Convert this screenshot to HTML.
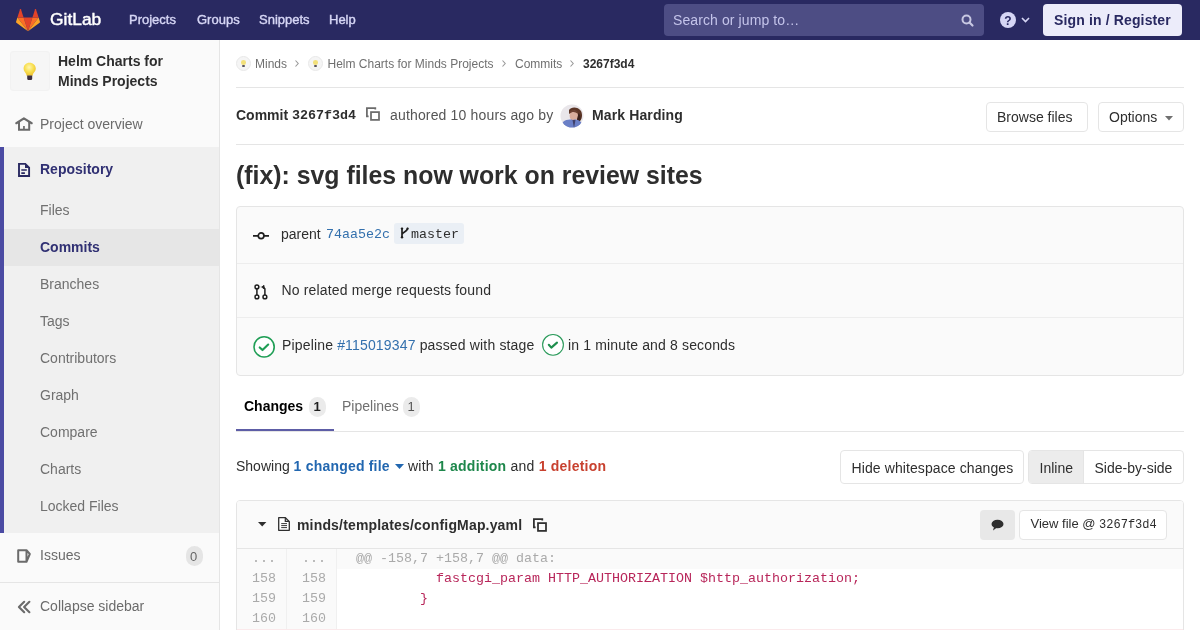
<!DOCTYPE html>
<html><head><meta charset="utf-8">
<style>
*{box-sizing:border-box;margin:0;padding:0}
html,body{width:1200px;height:630px;overflow:hidden;background:#fff;-webkit-font-smoothing:antialiased;font-family:"Liberation Sans",sans-serif;color:#2e2e2e;font-size:14px}
.a{position:absolute}
.mono{font-family:"Liberation Mono",monospace}
.t{position:absolute;white-space:nowrap;line-height:1}
.b{font-weight:bold}
svg{position:absolute;overflow:visible}
</style></head><body><div id="root" style="position:absolute;left:0;top:0;width:1200px;height:630px;will-change:transform">
<!-- HEADER -->
<div class="a" style="left:0;top:0;width:1200px;height:40px;background:#292961">
  <svg style="left:16px;top:8.6px" width="24" height="22.2" viewBox="0 0 210 194">
    <path d="M105.06 193.66 L143.7 74.73 H66.42 Z" fill="#e24329"/>
    <path d="M105.06 193.66 L66.42 74.73 H12.27 Z" fill="#fc6d26"/>
    <path d="M12.27 74.74 L0.53 110.88 C-0.54 114.17 0.63 117.78 3.43 119.82 L105.06 193.66 Z" fill="#fca326"/>
    <path d="M12.27 74.74 H66.42 L43.15 3.11 C41.95 -0.58 36.74 -0.58 35.54 3.11 Z" fill="#e24329"/>
    <path d="M105.06 193.66 L143.7 74.73 H197.85 Z" fill="#fc6d26"/>
    <path d="M197.85 74.74 L209.6 110.88 C210.67 114.17 209.49 117.78 206.69 119.82 L105.06 193.66 Z" fill="#fca326"/>
    <path d="M197.85 74.74 H143.7 L166.97 3.11 C168.17 -0.58 173.39 -0.58 174.59 3.11 Z" fill="#e24329"/>
  </svg>
  <div class="t" style="left:50px;top:10.5px;font-size:17.4px;color:#fff;-webkit-text-stroke:0.45px #fff">GitLab</div>
  <div class="t" style="left:129px;top:13px;font-size:13px;color:#d6d6f5;-webkit-text-stroke:0.4px #d6d6f5">Projects</div>
  <div class="t" style="left:197px;top:13px;font-size:13px;color:#d6d6f5;-webkit-text-stroke:0.4px #d6d6f5">Groups</div>
  <div class="t" style="left:259px;top:13px;font-size:13px;color:#d6d6f5;-webkit-text-stroke:0.4px #d6d6f5">Snippets</div>
  <div class="t" style="left:329px;top:13px;font-size:13px;color:#d6d6f5;-webkit-text-stroke:0.4px #d6d6f5">Help</div>
  <div class="a" style="left:664px;top:4px;width:320px;height:32px;background:#4d4d84;border-radius:4px"></div>
  <div class="t" style="left:673px;top:13px;color:#c4c4ea;letter-spacing:0.1px">Search or jump to…</div>
  <svg style="left:961px;top:14px" width="13" height="13" viewBox="0 0 13 13"><circle cx="5.5" cy="5.5" r="4" fill="none" stroke="#c8c8e2" stroke-width="2"/><path d="M8.5 8.5 L11.5 11.5" stroke="#c8c8e2" stroke-width="2.2" stroke-linecap="round"/></svg>
  <svg style="left:1000px;top:12px" width="16" height="16" viewBox="0 0 16 16"><circle cx="8" cy="8" r="8" fill="#d6d6f5"/><text x="8" y="12.5" font-family="Liberation Sans" font-weight="bold" font-size="12" text-anchor="middle" fill="#292961">?</text></svg>
  <svg style="left:1021px;top:17px" width="9" height="6" viewBox="0 0 9 6"><path d="M1 1 L4.5 4.5 L8 1" fill="none" stroke="#d6d6f5" stroke-width="1.6"/></svg>
  <div class="a" style="left:1043px;top:4px;width:139px;height:32px;background:#ececfa;border-radius:4px"></div>
  <div class="t b" style="left:1054px;top:13px;color:#292961;letter-spacing:0.14px">Sign in / Register</div>
</div>

<!-- SIDEBAR -->
<div class="a" style="left:0;top:40px;width:220px;height:590px;background:#fafafa;border-right:1px solid #e5e5e5"></div>
<div class="a" style="left:10px;top:51px;width:40px;height:40px;background:#f6f6f6;border-radius:4px;box-shadow:inset 0 0 0 1px #f2f2f2"></div>
<svg style="left:23.3px;top:62px;filter:blur(0.45px)" width="14" height="19" viewBox="0 0 14 19"><defs><radialGradient id="bg1" cx="0.45" cy="0.35" r="0.6"><stop offset="0" stop-color="#fff6b0"/><stop offset="0.6" stop-color="#f8df50"/><stop offset="1" stop-color="#efc534"/></radialGradient></defs><path d="M6.5 0.8 C10 0.8 12.8 3.4 12.8 6.6 C12.8 9 11 10.5 10 12 L9.6 13.8 H3.6 L3.2 12 C2.2 10.5 0.6 9 0.6 6.6 C0.6 3.4 3 0.8 6.5 0.8 Z" fill="url(#bg1)"/><path d="M4.2 13.4 H9.2 V16.4 C9.2 17.3 8.4 18 7.6 18 H5.8 C5 18 4.2 17.3 4.2 16.4 Z" fill="#3d3040"/></svg>
<div class="t b" style="left:58px;top:50.5px;line-height:20.7px">Helm Charts for<br>Minds Projects</div>
<svg style="left:10px;top:110px" width="30" height="30" viewBox="10 110 30 30"><path d="M16.3 123.2 L23.9 118.4 L31.7 123.2" fill="none" stroke="#6b6b6b" stroke-width="2.2" stroke-linejoin="round" stroke-linecap="round"/><path d="M19 121.5 V129.8 H29.2 V121.5" fill="none" stroke="#6b6b6b" stroke-width="2"/><rect x="23.1" y="126" width="1.7" height="4" fill="#6b6b6b"/></svg>
<div class="t" style="left:40px;top:117px;color:#6b6b6b">Project overview</div>

<div class="a" style="left:0;top:147px;width:219px;height:386px;background:#f0f0f0"></div>
<div class="a" style="left:0;top:147px;width:4px;height:386px;background:#4b4ba3"></div>
<div class="a" style="left:4px;top:229px;width:215px;height:37px;background:#e6e6e6"></div>
<svg style="left:12px;top:155px" width="24" height="28" viewBox="12 155 24 28"><path d="M19 163.9 H25.3 L29.1 167.7 V176 H19 Z" fill="none" stroke="#292961" stroke-width="1.9" stroke-linejoin="miter"/><path d="M25 163.5 V168 H29.5 Z" fill="#292961"/><path d="M21.3 170 H26.8 M21.3 173.1 H24.9" stroke="#292961" stroke-width="1.7"/></svg>
<div class="t b" style="left:40px;top:162px;color:#303073">Repository</div>
<div class="t" style="left:40px;top:203px;color:#707070">Files</div>
<div class="t b" style="left:40px;top:240px;color:#303073">Commits</div>
<div class="t" style="left:40px;top:277px;color:#707070">Branches</div>
<div class="t" style="left:40px;top:314px;color:#707070">Tags</div>
<div class="t" style="left:40px;top:351px;color:#707070">Contributors</div>
<div class="t" style="left:40px;top:388px;color:#707070">Graph</div>
<div class="t" style="left:40px;top:425px;color:#707070">Compare</div>
<div class="t" style="left:40px;top:462px;color:#707070">Charts</div>
<div class="t" style="left:40px;top:499px;color:#707070">Locked Files</div>

<svg style="left:17px;top:549px" width="14" height="14" viewBox="0 0 14 14"><path d="M1.2 1.2 H9.5 L12.8 5 L9.5 12.8 H1.2 Z M9.5 1.2 V12.8" fill="none" stroke="#6b6b6b" stroke-width="2" stroke-linejoin="round"/></svg>
<div class="t" style="left:40px;top:548px;color:#6b6b6b">Issues</div>
<div class="a" style="left:186px;top:546px;width:17px;height:20px;border-radius:10px;background:#e5e5e5"></div>
<div class="t" style="left:190px;top:550px;font-size:13px;color:#666">0</div>
<div class="a" style="left:0;top:582px;width:219px;height:1px;background:#e5e5e5"></div>
<svg style="left:12px;top:594px" width="24" height="24" viewBox="12 594 24 24"><path d="M24.2 601.8 L18.9 607 L24.2 612.2 M29.4 601.8 L24.1 607 L29.4 612.2" fill="none" stroke="#6b6b6b" stroke-width="2.1" stroke-linecap="round" stroke-linejoin="round"/></svg>
<div class="t" style="left:40px;top:599px;color:#6b6b6b">Collapse sidebar</div>

<!-- BREADCRUMBS -->
<div class="a" style="left:236px;top:56px;width:15px;height:15px;border-radius:50%;background:#f5f5f5;border:1px solid #e8e8e8"></div>
<div class="a" style="left:241.20000000000002px;top:60px;width:5.2px;height:4.6px;border-radius:50%;background:#f2e07a;filter:blur(0.4px)"></div><div class="a" style="left:242.4px;top:64.6px;width:2.6px;height:2.2px;border-radius:1px;background:#5a5560;filter:blur(0.3px)"></div>
<div class="t" style="left:255px;top:57.8px;font-size:12px;color:#707070">Minds</div>
<svg style="left:295px;top:60px" width="4" height="7" viewBox="0 0 4 7"><path d="M0.5 0.5 L3.2 3.5 L0.5 6.5" fill="none" stroke="#999" stroke-width="1.1"/></svg>
<div class="a" style="left:308px;top:56px;width:15px;height:15px;border-radius:50%;background:#f5f5f5;border:1px solid #e8e8e8"></div>
<div class="a" style="left:313.2px;top:60px;width:5.2px;height:4.6px;border-radius:50%;background:#f2e07a;filter:blur(0.4px)"></div><div class="a" style="left:314.40000000000003px;top:64.6px;width:2.6px;height:2.2px;border-radius:1px;background:#5a5560;filter:blur(0.3px)"></div>
<div class="t" style="left:327.5px;top:57.8px;font-size:12px;color:#707070">Helm Charts for Minds Projects</div>
<svg style="left:502px;top:60px" width="4" height="7" viewBox="0 0 4 7"><path d="M0.5 0.5 L3.2 3.5 L0.5 6.5" fill="none" stroke="#999" stroke-width="1.1"/></svg>
<div class="t" style="left:515px;top:57.8px;font-size:12px;color:#707070">Commits</div>
<svg style="left:570px;top:60px" width="4" height="7" viewBox="0 0 4 7"><path d="M0.5 0.5 L3.2 3.5 L0.5 6.5" fill="none" stroke="#999" stroke-width="1.1"/></svg>
<div class="t b" style="left:583px;top:57.8px;font-size:12px;color:#2e2e2e">3267f3d4</div>
<div class="a" style="left:236px;top:87px;width:948px;height:1px;background:#e5e5e5"></div>

<!-- COMMIT HEADER -->
<div class="t b" style="left:236px;top:108px">Commit</div>
<div class="t b mono" style="left:292px;top:108.5px;font-size:13.33px">3267f3d4</div>
<svg style="left:360px;top:102px" width="26" height="24" viewBox="360 102 26 24"><path d="M368.6 116.3 H366.9 V108.1 H375.3 V109.6" fill="none" stroke="#6b6b6b" stroke-width="1.75"/><rect x="371" y="112.1" width="8" height="7.8" fill="none" stroke="#6b6b6b" stroke-width="1.75"/></svg>
<div class="t" style="left:390px;top:108px;color:#555;letter-spacing:0.16px">authored 10 hours ago by</div>
<svg style="left:559.5px;top:104px" width="24" height="24" viewBox="0 0 24 24"><defs><clipPath id="avc"><circle cx="12" cy="12" r="11.5"/></clipPath><filter id="blr"><feGaussianBlur stdDeviation="0.7"/></filter></defs><g clip-path="url(#avc)"><rect width="24" height="24" fill="#e9e6ea"/><g filter="url(#blr)"><path d="M9 6 C11 2.5 18 2.5 21 7 C23 11 22 16 19 18 L16 14 C17 10 15 7 12 8 L9 10 Z" fill="#5b3526"/><ellipse cx="13.8" cy="11.8" rx="4.2" ry="5.2" fill="#d8ad9c"/><path d="M9.5 8 C11 5.5 16 5 18 8.5 L17.5 9.5 C15 7.5 12 7.5 10 9.5 Z" fill="#6b4030"/><path d="M18.5 9 C21 11 21 16 19 19 L17 16 Z" fill="#3a221c"/><path d="M0 24 L3 18 C6 15.5 10 15 13 16 C16 15 19 16 21 18 L24 24 Z" fill="#6a7fc6"/><path d="M12.5 16 L14 24 L15.5 16 Z" fill="#3f3f6a"/></g></g></svg>
<div class="t b" style="left:592px;top:108px;letter-spacing:0.12px">Mark Harding</div>
<div class="a" style="left:986px;top:102px;width:102px;height:30px;border:1px solid #e5e5e5;border-radius:4px;background:#fff"></div>
<div class="t" style="left:997px;top:110px">Browse files</div>
<div class="a" style="left:1098px;top:102px;width:86px;height:30px;border:1px solid #e5e5e5;border-radius:4px;background:#fff"></div>
<div class="t" style="left:1109px;top:110px">Options</div>
<svg style="left:1165px;top:116px" width="8" height="5" viewBox="0 0 8 5"><path d="M0 0 H8 L4 4.5 Z" fill="#707070"/></svg>
<div class="a" style="left:236px;top:144px;width:948px;height:1px;background:#e5e5e5"></div>

<!-- TITLE -->
<div class="t b" style="left:236px;top:164.3px;font-size:24.85px;color:#2e2e2e">(fix): svg files now work on review sites</div>

<!-- INFO BOX -->
<div class="a" style="left:236px;top:206px;width:948px;height:170px;background:#fafafa;border:1px solid #e5e5e5;border-radius:4px"></div>
<div class="a" style="left:237px;top:263px;width:946px;height:1px;background:#ededed"></div>
<div class="a" style="left:237px;top:317px;width:946px;height:1px;background:#ededed"></div>
<svg style="left:253px;top:231px" width="16" height="10" viewBox="0 0 16 10"><path d="M0 4.8 H5 M11 4.8 H16" stroke="#1f1f1f" stroke-width="1.8"/><circle cx="8.1" cy="4.8" r="2.85" fill="#fafafa" stroke="#1f1f1f" stroke-width="1.7"/></svg>
<div class="t" style="left:281px;top:227px">parent</div>
<div class="t mono" style="left:326px;top:227.5px;font-size:13.33px;color:#3370ad">74aa5e2c</div>
<div class="a" style="left:394px;top:223px;width:70px;height:21px;background:#eaeff5;border-radius:3px"></div>
<svg style="left:400px;top:227px" width="10" height="12" viewBox="0 0 10 12"><path d="M2 1.6 V10 M2 7.6 C2.4 4.8 7 5 7.5 1.6" fill="none" stroke="#1f1f1f" stroke-width="1.7" stroke-linecap="round"/><circle cx="2" cy="1.6" r="1.2" fill="#1f1f1f"/><circle cx="2" cy="10.2" r="1.2" fill="#1f1f1f"/><circle cx="7.6" cy="1.7" r="1.1" fill="#1f1f1f"/></svg>
<div class="t mono" style="left:411px;top:227.5px;font-size:13.33px;color:#2e2e2e">master</div>

<svg style="left:252px;top:282px" width="16" height="18" viewBox="0 0 16 18"><circle cx="4.9" cy="4.9" r="1.9" fill="#fff" stroke="#1f1f1f" stroke-width="1.5"/><circle cx="4.9" cy="14.9" r="1.9" fill="#fff" stroke="#1f1f1f" stroke-width="1.5"/><circle cx="12.9" cy="14.9" r="1.9" fill="#fff" stroke="#1f1f1f" stroke-width="1.5"/><path d="M4.9 6.8 V13 M12.9 13 V6.8 L11.4 5.2" fill="none" stroke="#1f1f1f" stroke-width="1.5" stroke-linejoin="round"/><path d="M9.7 5.1 L12 3.3 L12.2 6.9 Z" fill="#1f1f1f" stroke="#1f1f1f" stroke-width="0.8" stroke-linejoin="round"/><path d="M6.8 4.9 H9.8" stroke="#1f1f1f" stroke-width="0.5" opacity="0.4"/></svg>
<div class="t" style="left:281.5px;top:283px;letter-spacing:0.16px">No related merge requests found</div>

<svg style="left:253px;top:336px" width="22" height="22" viewBox="0 0 22 22"><circle cx="11.1" cy="10.9" r="10.1" fill="#fff" stroke="#1f9e55" stroke-width="1.6"/><path d="M6.7 11.4 L9.5 14.1 L15.2 8.5" fill="none" stroke="#1f9e55" stroke-width="2.1" stroke-linecap="round" stroke-linejoin="round"/></svg>
<div class="t" style="left:282px;top:338px;letter-spacing:0.16px">Pipeline <span style="color:#3370ad">#115019347</span> passed with stage</div>
<svg style="left:542px;top:334px" width="22" height="22" viewBox="0 0 22 22"><circle cx="11" cy="10.85" r="10.4" fill="#fff" stroke="#2a9a5a" stroke-width="1.1"/><path d="M6.8 10.8 L9.3 13.6 L15 8.6" fill="none" stroke="#1f8f4e" stroke-width="2.1" stroke-linecap="round" stroke-linejoin="round"/></svg>
<div class="t" style="left:568px;top:338px;letter-spacing:0.15px">in 1 minute and 8 seconds</div>

<!-- TABS -->
<div class="t b" style="left:244px;top:399px;color:#000">Changes</div>
<div class="a" style="left:309px;top:397px;width:17px;height:20px;border-radius:10px;background:#ebebeb"></div>
<div class="t b" style="left:313.5px;top:400px;font-size:13px;color:#1f1f1f">1</div>
<div class="t" style="left:342px;top:399px;color:#707070">Pipelines</div>
<div class="a" style="left:403px;top:397px;width:17px;height:20px;border-radius:10px;background:#ebebeb"></div>
<div class="t" style="left:407.5px;top:400px;font-size:13px;color:#555">1</div>
<div class="a" style="left:236px;top:431px;width:948px;height:1px;background:#e5e5e5"></div>
<div class="a" style="left:236px;top:429px;width:98px;height:2px;background:#5d5da6"></div>

<!-- SHOWING -->
<div class="t" style="left:236px;top:459px">Showing <span class="b" style="color:#2267b0;letter-spacing:0.2px">1 changed file</span></div>
<svg style="left:395px;top:464px" width="9" height="6" viewBox="0 0 9 6"><path d="M0 0 H9 L4.5 5 Z" fill="#2267b0"/></svg>
<div class="t" style="left:408px;top:459px;letter-spacing:0.23px">with <span class="b" style="color:#1e874b">1 addition</span> and <span class="b" style="color:#c8412f">1 deletion</span></div>

<div class="a" style="left:840px;top:450px;width:184px;height:34px;border:1px solid #e5e5e5;border-radius:4px;background:#fff"></div>
<div class="t" style="left:851.5px;top:460.5px;letter-spacing:0.1px">Hide whitespace changes</div>
<div class="a" style="left:1028px;top:450px;width:156px;height:34px;border:1px solid #e5e5e5;border-radius:4px;background:#fff;overflow:hidden"><div class="a" style="left:0;top:0;width:55px;height:32px;background:#ececec;border-right:1px solid #e5e5e5"></div></div>
<div class="t" style="left:1039.5px;top:460.5px">Inline</div>
<div class="t" style="left:1094.5px;top:460.5px">Side-by-side</div>

<!-- FILE -->
<div class="a" style="left:236px;top:500px;width:948px;height:140px;border:1px solid #e5e5e5;border-radius:4px;background:#fff;overflow:hidden">
  <div class="a" style="left:0;top:0;width:946px;height:48px;background:#fafafa;border-bottom:1px solid #e5e5e5"></div>
  <div class="a" style="left:0;top:48px;width:946px;height:20px;background:#fafafa"></div>
  <div class="a" style="left:0;top:68px;width:99px;height:80px;background:#fafafa"></div>
  <div class="a" style="left:49px;top:48px;width:1px;height:100px;background:#f0f0f0"></div>
  <div class="a" style="left:99px;top:48px;width:1px;height:100px;background:#f0f0f0"></div>
  <div class="a" style="left:0;top:128px;width:946px;height:2px;background:#fbe9eb"></div>
</div>
<svg style="left:257.8px;top:521.8px" width="8.4" height="4.6" viewBox="0 0 8.4 4.6"><path d="M0 0 H8.4 L4.2 4.6 Z" fill="#2e2e2e"/></svg>
<svg style="left:270px;top:510px" width="30" height="30" viewBox="270 510 30 30"><path d="M278.7 517.7 H285.4 L289.3 521.6 V530.3 H278.7 Z" fill="#fff" stroke="#2e2e2e" stroke-width="1.3" stroke-linejoin="round"/><path d="M285.3 517.8 V521.4 H289.2" fill="none" stroke="#2e2e2e" stroke-width="1.2"/><path d="M281.2 523.6 H287 M281.2 525.6 H287 M281.2 527.6 H287" stroke="#2e2e2e" stroke-width="0.95"/></svg>
<div class="t b" style="left:297px;top:518px;letter-spacing:0.17px">minds/templates/configMap.yaml</div>
<svg style="left:527px;top:513px" width="26" height="24" viewBox="360 102 26 24"><path d="M368.6 116.3 H366.9 V108.1 H375.3 V109.6" fill="none" stroke="#2e2e2e" stroke-width="1.75"/><rect x="371" y="112.1" width="8" height="7.8" fill="none" stroke="#2e2e2e" stroke-width="1.75"/></svg>
<div class="a" style="left:980px;top:510px;width:35px;height:30px;background:#e8e8e8;border-radius:4px"></div>
<svg style="left:991px;top:519px" width="13" height="12" viewBox="0 0 13 12"><ellipse cx="6.5" cy="5" rx="6" ry="4.3" fill="#2e2e2e"/><path d="M3 8 L2 11.5 L6 8.5 Z" fill="#2e2e2e"/></svg>
<div class="a" style="left:1019px;top:510px;width:148px;height:30px;border:1px solid #e5e5e5;border-radius:4px;background:#fff"></div>
<div class="t" style="left:1030.5px;top:517.3px;font-size:13px">View file @ <span class="mono" style="font-size:12px">3267f3d4</span></div>

<!-- DIFF -->
<div class="mono" style="position:absolute;left:237px;top:549px;width:946px;font-size:13.33px;line-height:20px;white-space:pre"><div style="position:relative;height:20px"><span class="a" style="left:0;width:50px;text-align:right;padding-right:11px;color:#aaa">...</span><span class="a" style="left:50px;width:50px;text-align:right;padding-right:11px;color:#aaa">...</span><span class="a" style="left:119px;color:#aaa">@@ -158,7 +158,7 @@ data:</span></div><div style="position:relative;height:20px"><span class="a" style="left:0;width:50px;text-align:right;padding-right:11px;color:#aaa">158</span><span class="a" style="left:50px;width:50px;text-align:right;padding-right:11px;color:#aaa">158</span><span class="a" style="left:119px;color:#b8265a">          fastcgi_param HTTP_AUTHORIZATION $http_authorization;</span></div><div style="position:relative;height:20px"><span class="a" style="left:0;width:50px;text-align:right;padding-right:11px;color:#aaa">159</span><span class="a" style="left:50px;width:50px;text-align:right;padding-right:11px;color:#aaa">159</span><span class="a" style="left:119px;color:#b8265a">        }</span></div><div style="position:relative;height:20px"><span class="a" style="left:0;width:50px;text-align:right;padding-right:11px;color:#aaa">160</span><span class="a" style="left:50px;width:50px;text-align:right;padding-right:11px;color:#aaa">160</span></div>
</div>
</div></body></html>
